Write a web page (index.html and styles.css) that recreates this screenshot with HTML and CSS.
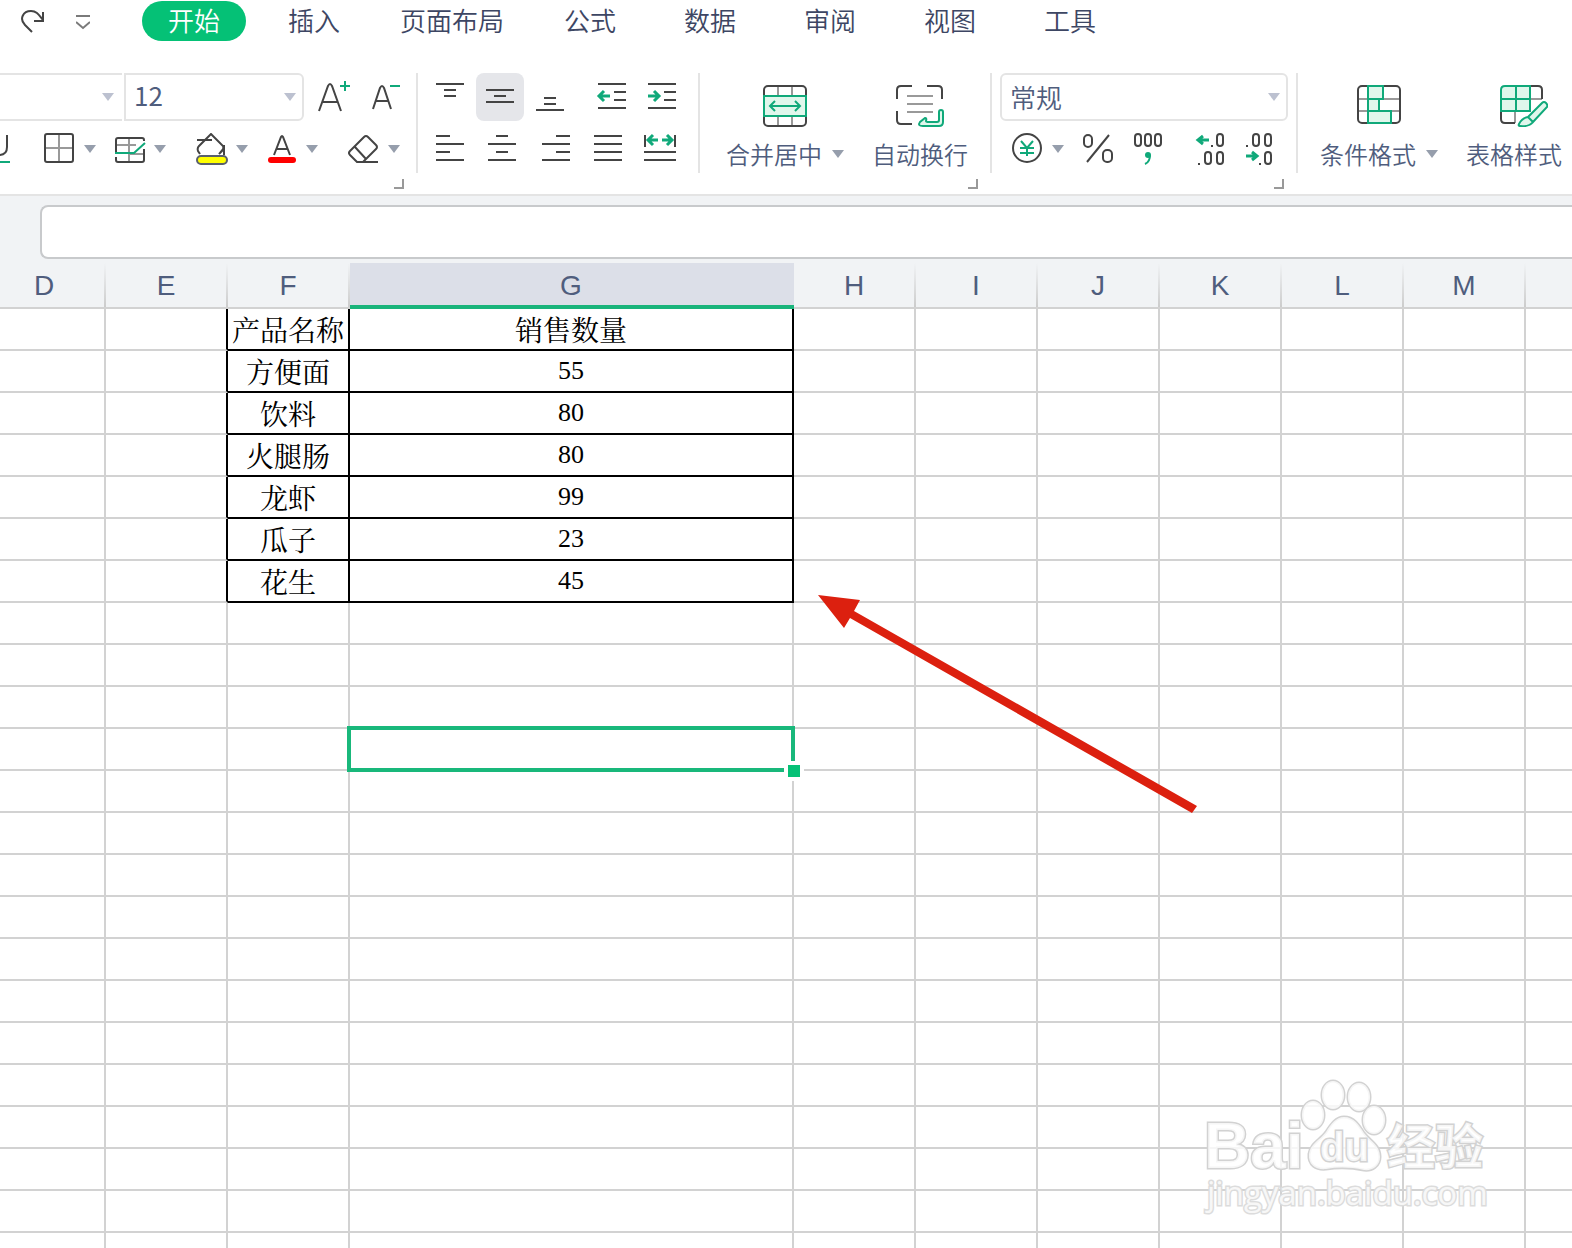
FILE: index.html
```html
<!DOCTYPE html>
<html lang="zh-CN">
<head>
<meta charset="utf-8">
<meta name="viewport" content="width=device-width, initial-scale=1">
<title>表格</title>
<link rel="stylesheet" href="styles.css">
</head>
<body>
<header class="menubar">
  <button class="quick" aria-label="恢复"><svg class="ink" width="26" height="26" viewBox="0 0 26 26"><path d="M12 24 5 17C-1 11 3 3 11 3c6 0 8 4 12 9M23 4v9H14"/></svg></button>
  <button class="quick" aria-label="更多"><svg class="soft" width="14" height="26" viewBox="0 0 14 26"><path d="M0 8h14M0 14l7 6 7-6"/></svg></button>
  <nav class="tabs">
    <button class="tab tab-active">开始</button>
    <button class="tab">插入</button>
    <button class="tab tab-wide">页面布局</button>
    <button class="tab">公式</button>
    <button class="tab">数据</button>
    <button class="tab">审阅</button>
    <button class="tab">视图</button>
    <button class="tab">工具</button>
  </nav>
</header>

<div class="ribbon">
  <section class="group">
    <div class="group-body font-group">
      <div class="row">
        <div class="picker picker-font"><select aria-label="字体"><option></option></select></div>
        <div class="picker picker-size"><select aria-label="字号"><option>12</option></select></div>
        <div class="size-steps">
          <button class="tool" aria-label="增大字号"><svg class="ink" width="32" height="32" viewBox="0 0 32 32"><path d="M1 30 10 5q2-4 4 0l9 25M4 21h16"/><path class="green" d="M22 5h10M27 0v10"/></svg></button>
          <button class="tool" aria-label="减小字号"><svg class="ink" width="32" height="32" viewBox="0 0 32 32"><path d="M3 28 10 7q2-4 4 0l7 21M6 20h13"/><path class="green" d="M20 5h10"/></svg></button>
        </div>
      </div>
      <div class="row tools">
        <button class="tool underline" aria-label="下划线"><svg class="ink" width="10" height="32" viewBox="0 0 10 32"><path d="M7 2v12c0 5-3 8-8 8"/><path class="green" d="M0 29h10"/></svg></button>
        <button class="tool caret" aria-label="边框"><svg class="ink" width="32" height="32" viewBox="0 0 32 32"><path class="grey" d="M15 1v28M1 15h28"/><rect x="1" y="1" width="28" height="28" rx="2"/></svg></button>
        <button class="tool caret" aria-label="绘图边框"><svg class="ink" width="32" height="32" viewBox="0 0 32 32"><path class="grey" d="M15 5v24M2 12h20M15 21h14"/><path d="M2 19V7q0-2 2-2h24q2 0 2 2v1M2 24v3q0 2 2 2h24q2 0 2-2V16"/><path class="green" d="M1 20h19L31 10"/></svg></button>
        <button class="tool caret step" aria-label="填充颜色"><svg class="ink" width="32" height="32" viewBox="0 0 32 32"><path d="M1 7h15M4 21 2 18q-1-3 1-5L15 1l12 12q1 3-1 5l-3 3M28 12v10M23 21l4-5"/><rect x="1" y="23" width="30" height="8" rx="4" fill="#ff0" stroke="#59606c"/></svg></button>
        <button class="tool caret" aria-label="字体颜色"><svg class="ink" width="32" height="32" viewBox="0 0 32 32"><path d="M8 22 15 4q1-2 2 0l7 18M10 16h12"/><rect x="2" y="24" width="28" height="6" rx="3" fill="#f00" stroke="none"/></svg></button>
        <button class="tool caret step" aria-label="清除"><svg class="ink" width="32" height="32" viewBox="0 0 32 32"><path d="M2 18 16 4q2-2 4 0l8 8q2 2 0 4L15 29H9l-7-7q-2-2 0-4ZM7 14l11 12M12 29h18"/></svg></button>
      </div>
    </div>
    <button class="launcher" aria-label="字体设置"></button>
  </section>

  <section class="group">
    <div class="group-body align-group">
      <div class="row row-top">
        <button class="square" aria-label="顶端对齐"><svg class="ink" width="32" height="32" viewBox="0 0 32 32"><path d="M2 3h28M10 9h12M10 15h12"/></svg></button>
        <button class="square square-on" aria-label="垂直居中"><svg class="ink" width="32" height="32" viewBox="0 0 32 32"><path d="M2 9h28M10 15h12M2 21h28"/></svg></button>
        <button class="square" aria-label="底端对齐"><svg class="ink" width="32" height="32" viewBox="0 0 32 32"><path d="M10 17h12M10 23h12M2 29h28"/></svg></button>
        <button class="square indent" aria-label="减少缩进"><svg class="ink" width="32" height="32" viewBox="0 0 32 32"><path d="M2 3h28M18 11h12M18 19h12M2 27h28"/><path class="green arrow" d="M14 15H3M8 10l-5 5 5 5"/></svg></button>
        <button class="square" aria-label="增加缩进"><svg class="ink" width="32" height="32" viewBox="0 0 32 32"><path d="M2 3h28M18 11h12M18 19h12M2 27h28"/><path class="green arrow" d="M2 15h11M8 10l5 5-5 5"/></svg></button>
      </div>
      <div class="row row-bottom">
        <button class="square" aria-label="左对齐"><svg class="ink" width="32" height="32" viewBox="0 0 32 32"><path d="M2 3h14M2 11h28M2 19h14M2 27h28"/></svg></button>
        <button class="square" aria-label="水平居中"><svg class="ink" width="32" height="32" viewBox="0 0 32 32"><path d="M10 3h12M2 11h28M10 19h12M2 27h28"/></svg></button>
        <button class="square nudge" aria-label="右对齐"><svg class="ink" width="32" height="32" viewBox="0 0 32 32"><path d="M16 3h14M2 11h28M16 19h14M2 27h28"/></svg></button>
        <button class="square" aria-label="两端对齐"><svg class="ink" width="32" height="32" viewBox="0 0 32 32"><path d="M2 3h28M2 11h28M2 19h28M2 27h28"/></svg></button>
        <button class="square" aria-label="分散对齐"><svg class="ink" width="32" height="32" viewBox="0 0 32 32"><path d="M1 2v12M31 2v12M0 19h32M0 27h32"/><path class="green arrow" d="M14 7H5M9 2 4 7l5 5M18 7h9M23 2l5 5-5 5"/></svg></button>
      </div>
    </div>
  </section>

  <section class="group">
    <div class="group-body big-group">
      <button class="big"><svg class="ink" width="44" height="42" viewBox="0 0 44 42"><path class="grey" d="M15 1v40M29 1v40"/><rect x="1" y="1" width="42" height="40" rx="4"/><rect class="mint" x="1" y="11" width="42" height="20"/><path class="green" d="M7 21h30M12 16l-5 5 5 5M32 16l5 5-5 5"/></svg><span class="big-label caret">合并居中</span></button>
      <button class="big"><svg class="ink" width="50" height="42" viewBox="0 0 50 42"><path d="M17 1H6Q2 1 2 5v9M32 1h11q4 0 4 4v9M2 26v9q0 4 4 4h11"/><path class="grey" d="M12 11h26M12 19h26M12 27h26"/><path class="mint" d="M44 27q0-2 2-2t2 2v10q0 4-4 4H28q-6 0-3-4l5-4q2 0 1 3 0 1 3 1h8q2 0 2-2Z"/></svg><span class="big-label">自动换行</span></button>
    </div>
    <button class="launcher" aria-label="对齐设置"></button>
  </section>

  <section class="group">
    <div class="group-body number-group">
      <div class="row"><div class="picker picker-number"><select aria-label="数字格式"><option>常规</option></select></div></div>
      <div class="row tools">
        <button class="tool caret" aria-label="货币"><svg class="ink" width="32" height="32" viewBox="0 0 32 32"><circle cx="15" cy="15" r="14"/><path class="green" d="m9 8 6 7 6-7M8 15h14M8 20h14M15 15v8"/></svg></button>
        <button class="tool" aria-label="百分比"><svg class="ink" width="32" height="32" viewBox="0 0 32 32"><path d="M27 2 5 29"/><rect x="2" y="2" width="8" height="12" rx="4"/><rect x="21" y="17" width="9" height="12" rx="4"/></svg></button>
        <button class="tool" aria-label="千位分隔"><svg class="ink" width="32" height="32" viewBox="0 0 32 32"><rect x="3" y="1" width="6" height="12" rx="3"/><rect x="13" y="1" width="6" height="12" rx="3"/><rect x="23" y="1" width="6" height="12" rx="3"/><circle cx="16" cy="22" r="3" fill="#10a97a" stroke="none"/><path class="green" d="M18 22q0 7-5 9"/></svg></button>
        <button class="tool step" aria-label="增加小数位"><svg class="ink" width="32" height="32" viewBox="0 0 32 32"><rect x="23" y="1" width="6" height="12" rx="3"/><rect x="11" y="19" width="6" height="12" rx="3"/><rect x="23" y="19" width="6" height="12" rx="3"/><path d="M17 13h2M4 31h2"/><path class="green arrow" d="M15 7H5M9 3 4 7l5 4"/></svg></button>
        <button class="tool" aria-label="减少小数位"><svg class="ink" width="32" height="32" viewBox="0 0 32 32"><rect x="9" y="1" width="6" height="12" rx="3"/><rect x="21" y="1" width="6" height="12" rx="3"/><rect x="21" y="19" width="6" height="12" rx="3"/><path d="M2 13h2M15 31h2"/><path class="green arrow" d="M2 23h10M8 19l5 4-5 4"/></svg></button>
      </div>
    </div>
    <button class="launcher" aria-label="数字设置"></button>
  </section>

  <section class="group group-last">
    <div class="group-body big-group">
      <button class="big"><svg class="ink" width="44" height="42" viewBox="0 0 44 42"><path class="grey" d="M1 14h42M1 26h42"/><rect x="1" y="1" width="42" height="37" rx="4"/><path class="mint" d="M11 1h15v13H11ZM11 14h11v12H11ZM11 26h23v12H11Z"/></svg><span class="big-label caret">条件格式</span></button>
      <button class="big"><svg class="ink" width="68" height="42" viewBox="0 0 68 42"><path class="grey" d="M50 14h12M35 26v12"/><path d="M50 1h8q4 0 4 4v9M21 27v7q0 4 4 4h10"/><path class="mint" d="M21 5q0-4 4-4h25v25H21ZM36 1v25M21 14h29"/><path class="mint" d="m48 32 14-14q2-2 4 0t1 4L53 37ZM48 32l5 5q-4 5-13 4-2 0-1-2 3-6 9-7Z"/></svg><span class="big-label">表格样式</span></button>
    </div>
  </section>
</div>

<div class="formula-bar"><input class="formula" type="text" aria-label="编辑栏"></div>

<main class="sheet">
  <table class="grid">
    <colgroup><col class="col-d"><col class="col-std"><col class="col-std"><col class="col-g"><col class="col-std"><col class="col-std"><col class="col-std"><col class="col-std"><col class="col-std"><col class="col-std"><col></colgroup>
    <thead><tr><th class="head-d">D</th><th>E</th><th>F</th><th class="head-on">G</th><th>H</th><th>I</th><th>J</th><th>K</th><th>L</th><th>M</th><th class="head-end"></th></tr></thead>
    <tbody>
      <tr><td><td class="edge"><td class="box">产品名称<td class="box">销售数量<td><td><td><td><td><td><td></tr>
      <tr><td><td class="edge"><td class="box">方便面<td class="box num">55<td><td><td><td><td><td><td></tr>
      <tr><td><td class="edge"><td class="box">饮料<td class="box num">80<td><td><td><td><td><td><td></tr>
      <tr><td><td class="edge"><td class="box">火腿肠<td class="box num">80<td><td><td><td><td><td><td></tr>
      <tr><td><td class="edge"><td class="box">龙虾<td class="box num">99<td><td><td><td><td><td><td></tr>
      <tr><td><td class="edge"><td class="box">瓜子<td class="box num">23<td><td><td><td><td><td><td></tr>
      <tr><td><td class="edge"><td class="box">花生<td class="box num">45<td><td><td><td><td><td><td></tr>
      <tr><td><td><td><td><td><td><td><td><td><td><td></tr>
      <tr><td><td><td><td><td><td><td><td><td><td><td></tr>
      <tr><td><td><td><td><td><td><td><td><td><td><td></tr>
      <tr><td><td><td><td class="selected"><div class="selection"></div><td><td><td><td><td><td><td></tr>
      <tr><td><td><td><td><td><td><td><td><td><td><td></tr>
      <tr><td><td><td><td><td><td><td><td><td><td><td></tr>
      <tr><td><td><td><td><td><td><td><td><td><td><td></tr>
      <tr><td><td><td><td><td><td><td><td><td><td><td></tr>
      <tr><td><td><td><td><td><td><td><td><td><td><td></tr>
      <tr><td><td><td><td><td><td><td><td><td><td><td></tr>
      <tr><td><td><td><td><td><td><td><td><td><td><td></tr>
      <tr><td><td><td><td><td><td><td><td><td><td><td></tr>
      <tr><td><td><td><td><td><td><td><td><td><td><td></tr>
      <tr><td><td><td><td><td><td><td><td><td><td><td></tr>
      <tr><td><td><td><td><td><td><td><td><td><td><td></tr>
      <tr><td><td><td><td><td><td><td><td><td><td><td></tr>
    </tbody>
  </table>
  <svg class="pointer" width="390" height="226" viewBox="0 0 390 226" aria-hidden="true"><path fill="#dc200f" d="m8 5 42 5-6 11 343 195-5 7L40 28l-6 10Z"/></svg>
  <svg class="watermark" width="300" height="150" viewBox="0 0 300 150">
    <g class="mark">
      <ellipse cx="113" cy="40" rx="11" ry="14"/><ellipse cx="133" cy="20" rx="11" ry="14"/><ellipse cx="159" cy="22" rx="11" ry="14"/><ellipse cx="174" cy="45" rx="11" ry="14"/>
      <path d="M144 42c10 0 15 8 20 16 6 8 16 12 16 24 0 9-8 14-16 13-14-3-26-3-38-1-10 1-18-4-17-15 1-10 11-14 17-22 5-8 10-15 18-15Z"/>
      <text class="mark-name" x="4" y="93">Bai</text>
      <text class="mark-du" x="120" y="86">du</text>
      <text class="mark-cjk" x="187" y="89">经验</text>
      <text class="mark-url" x="7" y="130">jingyan.baidu.com</text>
    </g>
  </svg>
</main>
</body>
</html>
```
FILE: styles.css
```css
* { box-sizing: border-box; }

html, body { height: 100%; }

body {
  margin: 0;
  display: flex;
  flex-direction: column;
  overflow: hidden;
  background: #fff;
  color: #3d4663;
  font-family: "Noto Sans CJK SC", sans-serif;
  font-weight: 350;
}

button {
  margin: 0;
  padding: 0;
  border: 0;
  background: none;
  color: inherit;
  font: inherit;
  white-space: nowrap;
}

svg { display: block; fill: none; stroke-width: 2; flex: none; }
.ink { stroke: #444; stroke-linecap: butt; }
.soft { stroke: #7a7a7a; }
.green { stroke: #10a97a; }
.arrow { stroke-width: 3; }
.grey { stroke: #999; }
.mint { stroke: #10a97a; fill: #e0f7ec; }

/* Menu bar */
.menubar { display: flex; align-items: center; padding: 1px 0 0 20px; flex: none; }
.quick { margin-right: 30px; }
.quick + .quick { margin-right: 52px; }
.tabs { display: flex; gap: 68px; }
.tab { height: 40px; font-size: 26px; line-height: 38px; padding-bottom: 2px; }
.tab-active { margin-right: -26px; padding: 0 26px 2px; border-radius: 20px; background: #05c176; color: #fff; }
.tab-wide { margin: 0 -8px; }

/* Ribbon */
.ribbon { display: flex; flex: none; padding: 32px 0 5px; border-bottom: 2px solid #e4e4e4; }
.group { display: flex; flex-direction: column; flex: none; }
.group-body { height: 100px; border-right: 2px solid #e4e4e4; }
.group-last .group-body { border-right: 0; }
.row { display: flex; align-items: center; height: 48px; }
.row + .row { margin-top: 4px; }
.tools { gap: 18px; }
.tool { display: flex; align-items: center; }
.step { margin-left: 12px; }
.underline { margin-right: 16px; }
.caret { display: flex; align-items: center; gap: 8px; }
.caret::after { content: ""; border: 6px solid transparent; border-top: 8px solid #969eac; border-bottom: 0; }
.big-label.caret { gap: 10px; }

.font-group { padding-right: 14px; }
.size-steps { display: flex; gap: 20px; margin-left: 14px; }

.picker { position: relative; height: 48px; border: 2px solid #e4e4e4; border-radius: 6px; }
.picker::after { content: ""; position: absolute; right: 6px; top: 18px; border: 6px solid transparent; border-top: 8px solid #bcc1d0; border-bottom: 0; pointer-events: none; }
.picker select { display: block; width: 100%; height: 44px; padding: 0 8px 2px; border: 0; background: none; appearance: none; color: #4f5d7d; font: inherit; font-size: 26px; }
.picker-font { width: 122px; border-width: 2px 0; border-radius: 0; }
.picker-font::after { right: 8px; }
.picker-size { width: 180px; margin-left: 2px; border-radius: 0 6px 6px 0; }
.picker-size select { padding-bottom: 6px; font-weight: 400; }
.picker-number { width: 288px; }

.align-group { padding: 0 12px 0 8px; }
.row-top { gap: 2px; }
.row-bottom { gap: 4px; }
.square { display: flex; align-items: center; justify-content: center; width: 48px; height: 48px; border-radius: 8px; }
.square-on { background: #e5e6ea; }
.indent { margin-left: 12px; }
.nudge { margin-left: 2px; }

.big-group { display: flex; gap: 28px; padding: 0 22px 0 26px; }
.group-last .big-group { padding-left: 22px; }
.big { display: flex; flex-direction: column; align-items: center; padding-top: 12px; color: #4f5d7d; }
.big-label { font-size: 24px; line-height: 30px; }
.big svg { margin-bottom: 12px; }

.number-group { padding: 0 8px; }
.number-group .tools { padding-left: 12px; }

.launcher { align-self: flex-end; width: 10px; height: 10px; margin: 6px 14px 0 0; border-right: 2px solid #999; border-bottom: 2px solid #999; }

/* Formula bar */
.formula-bar { flex: none; display: flex; padding: 9px 0 4px 40px; background: #f1f3f5; }
.formula { flex: 1; height: 54px; padding: 0 12px; border: 2px solid #c8cacc; border-right: 0; border-radius: 8px 0 0 8px; background: #fff; font-size: 26px; }

/* Sheet */
.sheet { position: relative; flex: 1; min-height: 0; overflow: hidden; }
.grid { width: 100%; table-layout: fixed; border-collapse: separate; border-spacing: 0; }
.col-d { width: 106px; }
.col-std { width: 122px; }
.col-g { width: 444px; }

th {
  height: 46px;
  padding: 2px 2px 0 0;
  border-bottom: 2px solid #d2d2d2;
  background: linear-gradient(#f1f3f5, #ccc) right / 2px 100% no-repeat #f1f3f5;
  color: #4f5d7d;
  font: 28px "Liberation Sans", sans-serif;
}
.head-d { padding-right: 18px; }
.head-on { padding-top: 4px; border-bottom: 4px solid #19b47b; background: #dcdfe8; }
.head-end { background: #f1f3f5; }

td {
  height: 42px;
  padding: 0;
  border: solid #d2d2d2;
  border-width: 0 2px 2px 0;
  color: #000;
  font: 28px/40px "Noto Serif CJK SC", "Noto Sans CJK SC", serif;
  text-align: center;
  white-space: nowrap;
}
td:last-child { border-right: 0; }
.edge { border-right-color: #000; }
.box { border-color: #000; }
.num { font-family: "Liberation Serif", serif; font-size: 26px; }

.selected { position: relative; }
.selection { position: absolute; inset: -3px; border: 4px solid #19b87b; }
.selection::after { content: ""; position: absolute; right: -9px; bottom: -9px; width: 12px; height: 12px; background: #05c176; box-shadow: 0 0 0 4px #fff; }

.pointer { position: absolute; left: 810px; top: 327px; }

.watermark { position: absolute; right: 72px; bottom: 23px; }
.mark { fill: #fff; fill-opacity: 0.8; stroke: #d2d2d2; stroke-width: 3; paint-order: stroke; }
.mark-name { font: bold 64px "Liberation Sans", sans-serif; }
.mark-du { font: bold 40px "Liberation Sans", sans-serif; }
.mark-cjk { font: bold 48px "Noto Sans CJK SC", sans-serif; }
.mark-url { font: 33px "Open Sans", sans-serif; stroke: #dcdcdc; }
```
